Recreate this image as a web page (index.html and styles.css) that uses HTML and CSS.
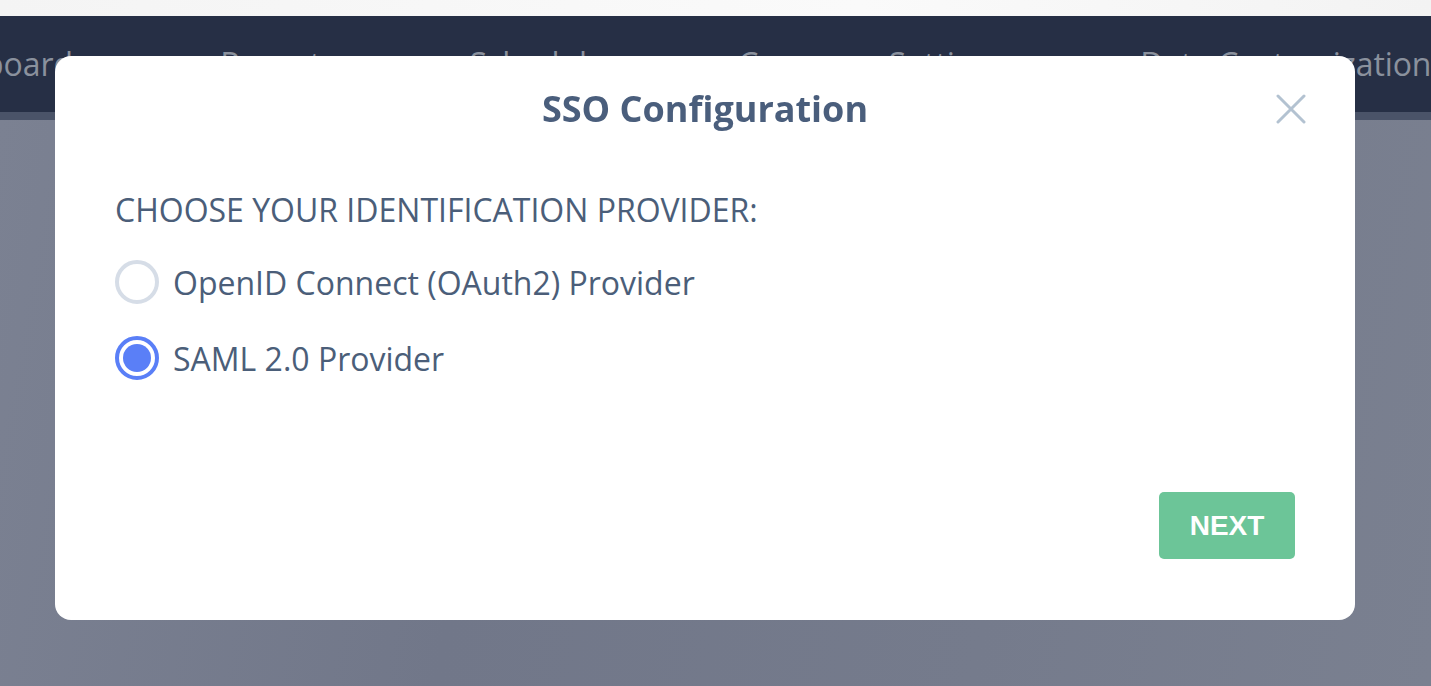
FILE: index.html
```html
<!DOCTYPE html>
<html lang="en">
<head>
    <meta charset="UTF-8">
    <meta name="viewport" content="width=device-width, initial-scale=1.0">
    <title>SSO Configuration</title>
    <link rel="stylesheet" href="styles.css">
</head>
<body>
    <div class="topbar"></div>
    <nav class="nav">
        <ul class="nav-list">
            <li class="nav-item">Dashboard</li>
            <li class="nav-item">Reports</li>
            <li class="nav-item">Schedule</li>
            <li class="nav-item">Company Settings</li>
            <li class="nav-item">Data Customization</li>
        </ul>
    </nav>
    <div class="nav-edge"></div>
    <main class="main"></main>

    <div class="backdrop">
        <div class="modal">
            <div class="modal-head">
                <h2 class="modal-title">SSO Configuration</h2>
                <button class="modal-close" aria-label="Close">
                    <svg width="30" height="30" viewBox="0 0 30 30">
                        <path d="M2 2 L28 28 M28 2 L2 28" stroke="#b3c2d1" stroke-width="3" stroke-linecap="round"/>
                    </svg>
                </button>
            </div>
            <div class="modal-body">
                <p class="provider-label">CHOOSE YOUR IDENTIFICATION PROVIDER:</p>
                <label class="radio">
                    <input type="radio" name="provider" value="oidc">
                    <span class="radio-mark"></span>
                    <span class="radio-text">OpenID Connect (OAuth2) Provider</span>
                </label>
                <label class="radio">
                    <input type="radio" name="provider" value="saml" checked>
                    <span class="radio-mark"></span>
                    <span class="radio-text">SAML 2.0 Provider</span>
                </label>
            </div>
            <div class="modal-foot">
                <button class="btn-next">NEXT</button>
            </div>
        </div>
    </div>
</body>
</html>
```

FILE: styles.css
```css
html, body{
    margin: 0;
    height: 100%;
    overflow: hidden;
}
body{
    display: flex;
    flex-direction: column;
    font-family: "Open Sans", "Noto Sans", sans-serif;
    background: #767c8c;
}
.topbar{
    height: 16px;
    background: linear-gradient(90deg, #f4f4f4, #fafafa 60%, #f3f3f3);
}
.nav{
    height: 96px;
    background: #262f45;
    overflow: hidden;
}
/* the menu is scrolled sideways, so the first item starts off screen */
.nav-list{
    display: flex;
    gap: 133px;
    margin: 0 0 0 -92px;
    padding: 0;
    list-style: none;
}
.nav-item{
    font-size: 32px;
    line-height: 96px;
    color: #8a919d;
    white-space: nowrap;
}
.nav-item:first-child{
    margin-right: 14px;
}
.nav-item:last-child{
    letter-spacing: -0.1px;
}
.nav-edge{
    height: 8px;
    background: #4a5368;
}
.main{
    flex: 1;
    background: linear-gradient(100deg, #7b8192 0%, #717789 35%, #757b8c 70%, #7a8090 100%);
}

/* modal */
.backdrop{
    position: fixed;
    inset: 0;
    padding: 56px 0 0 55px;
}
.modal{
    width: 1300px;
    height: 564px;
    box-sizing: border-box;
    padding: 0 60px 61px 60px;
    background: #fff;
    border-radius: 16px;
    display: flex;
    flex-direction: column;
}
.modal-head{
    position: relative;
    height: 104px;
    display: flex;
    align-items: center;
    justify-content: center;
}
.modal-title{
    margin: 0;
    font-size: 36px;
    font-weight: 700;
    color: #4a5e7c;
}
.modal-close{
    position: absolute;
    right: -11px;
    top: 38px;
    padding: 0;
    border: none;
    background: none;
    cursor: pointer;
    display: flex;
}
.modal-body{
    flex: 1;
    padding-top: 29px;
}
.provider-label{
    margin: 0 0 13px;
    font-size: 32px;
    line-height: 42px;
    color: #4b5e79;
}
.radio{
    display: flex;
    align-items: center;
    gap: 14px;
    height: 76px;
    cursor: pointer;
}
.radio input{
    display: none;
}
.radio-mark{
    width: 44px;
    height: 44px;
    box-sizing: border-box;
    border: 4px solid #d6dde7;
    border-radius: 50%;
    padding: 4px;
    background-clip: content-box;
}
.radio input:checked + .radio-mark{
    border-color: #5a7ff7;
    background-color: #5a7ff7;
}
.radio-text{
    font-size: 32px;
    color: #4b5e79;
}
.modal-foot{
    display: flex;
    justify-content: flex-end;
}
.btn-next{
    width: 136px;
    height: 67px;
    border: none;
    border-radius: 5px;
    background: #6cc598;
    color: #fff;
    font-family: "Liberation Sans", Arial, sans-serif;
    font-weight: 700;
    font-size: 28px;
    cursor: pointer;
}
```
